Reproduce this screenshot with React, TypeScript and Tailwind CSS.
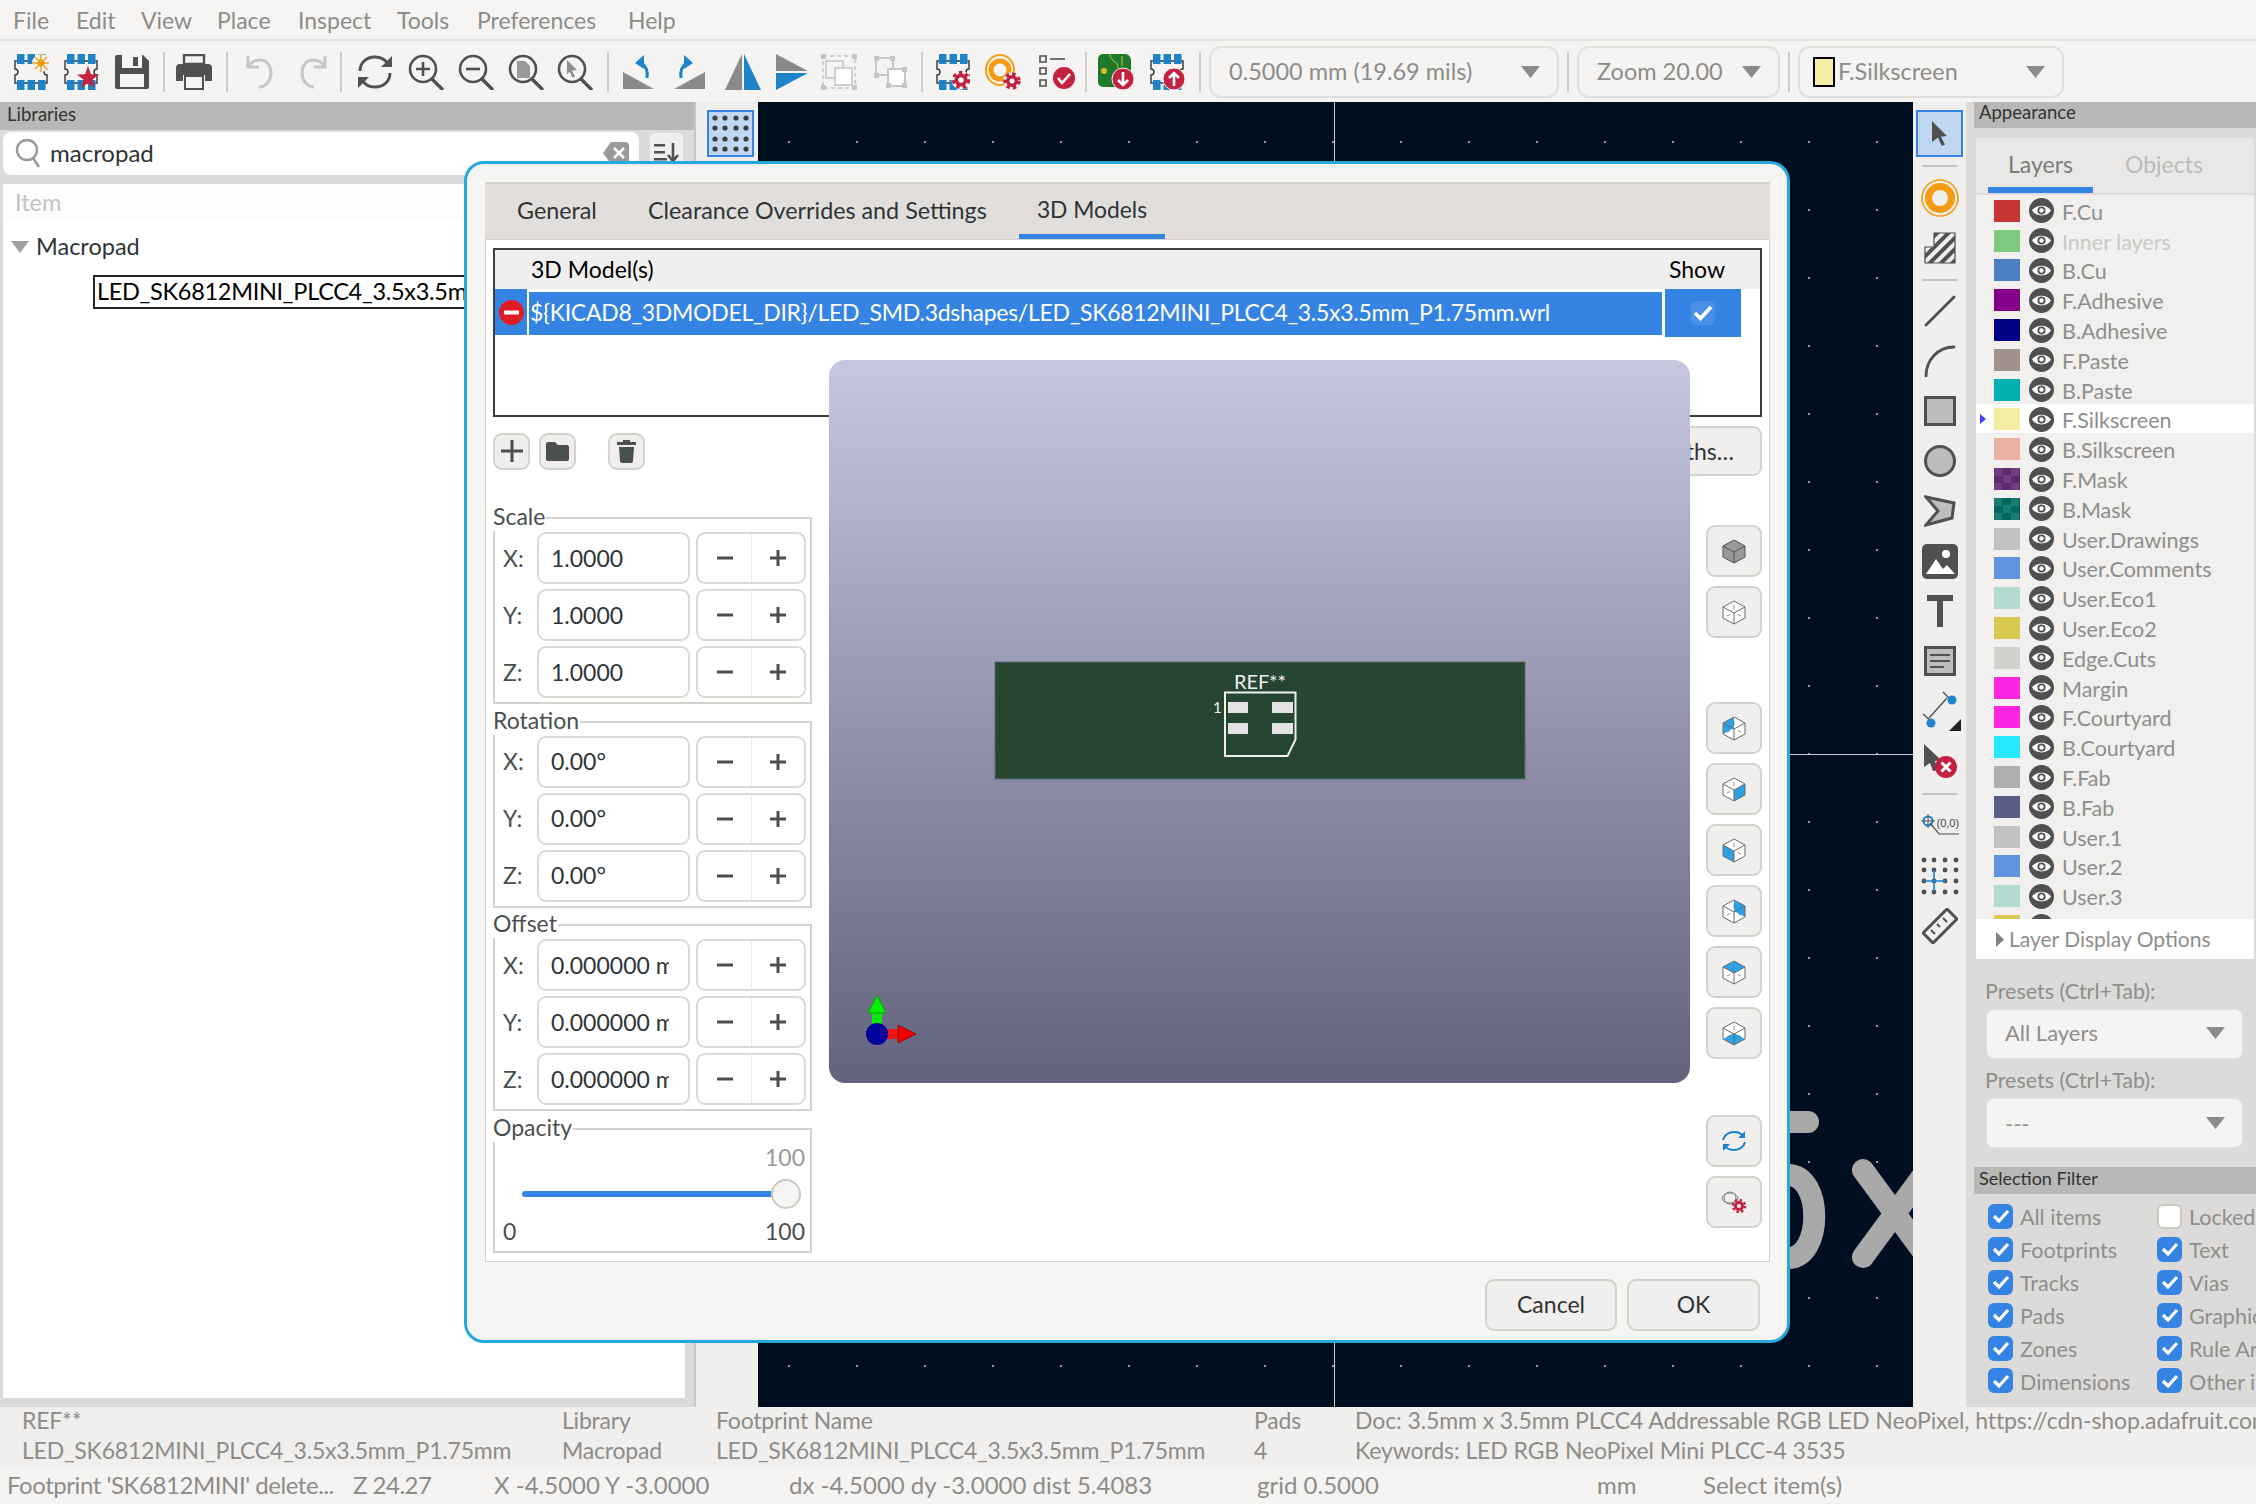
import React from "react";

const DARK = "#505050";
const CRIMSON = "#c4203f";
const BLUE = "#1e84c9";

const menus = [
  { label: "File", cls: "w-[63px]" },
  { label: "Edit", cls: "w-[65px]" },
  { label: "View", cls: "w-[76px]" },
  { label: "Place", cls: "w-[81px]" },
  { label: "Inspect", cls: "w-[99px]" },
  { label: "Tools", cls: "w-[80px]" },
  { label: "Preferences", cls: "w-[151px]" },
  { label: "Help", cls: "w-[60px]" },
];

const Ico = ({ children, cls = "" }: { children: React.ReactNode; cls?: string }) => (
  <svg width="36" height="36" viewBox="0 0 36 36" className={`shrink-0 ${cls}`}>
    {children}
  </svg>
);

const FpBase = () => (
  <>
    <path d="M2 7h32v8a3 3 0 0 0 0 6v8H2v-8a3 3 0 0 0 0-6z" fill="none" stroke="#333" strokeWidth="1.4" />
    {[4, 14.5, 25].map((x) => (
      <g key={x}>
        <rect x={x} y="0" width="7.5" height="10" fill={BLUE} />
        <rect x={x} y="26" width="7.5" height="10" fill={BLUE} />
      </g>
    ))}
  </>
);

const Gear = ({ x, y, r = 7 }: { x: number; y: number; r?: number }) => (
  <g>
    <circle cx={x} cy={y} r={r + 3} fill="#f5f4f2" />
    <circle cx={x} cy={y} r={r} fill={CRIMSON} />
    <circle cx={x} cy={y} r={r + 1} fill="none" stroke={CRIMSON} strokeWidth="3.4" strokeDasharray="3.4 3.2" />
    <circle cx={x} cy={y} r={r * 0.42} fill="#fff" />
  </g>
);

const ZoomBase = ({ children }: { children?: React.ReactNode }) => (
  <Ico>
    <circle cx="15" cy="15" r="13" fill="none" stroke={DARK} strokeWidth="2.6" />
    <path d="M24 25l10 10" stroke={DARK} strokeWidth="3.4" strokeLinecap="round" />
    {children}
  </Ico>
);

const Sep = ({ cls = "" }: { cls?: string }) => <div className={`w-[2px] h-[40px] bg-[#cfcdca] shrink-0 ${cls}`} />;

const ComboArrow = () => (
  <svg width="19" height="12" viewBox="0 0 19 12" className="shrink-0">
    <path d="M0 0h19l-9.5 12z" fill="#8a8a88" />
  </svg>
);

const Toolbar = () => (
  <div className="h-[61px] flex items-center pl-[13px] bg-[#f5f4f2] text-[#8d8c89] text-[23.5px]">
    <Ico>
      <FpBase />
      <circle cx="28" cy="9" r="9" fill="#f5f4f2" />
      <circle cx="28" cy="9" r="3.5" fill="#f39c12" />
      <path d="M28 0v18M19 9h18M22 3l12 12M34 3L22 15" stroke="#f39c12" strokeWidth="1.4" />
    </Ico>
    <Ico cls="ml-[14px]">
      <FpBase />
      <path d="M25 12l2.9 8.2 8.1.2-6.4 5 2.3 8.6-6.9-4.9-6.9 4.9 2.3-8.6-6.4-5 8.1-.2z" fill={CRIMSON} />
    </Ico>
    <Ico cls="ml-[15px]">
      <path d="M1 3a2 2 0 0 1 2-2h26l6 6v26a2 2 0 0 1-2 2H3a2 2 0 0 1-2-2z" fill={DARK} />
      <rect x="8" y="1" width="20" height="13" fill="#f5f4f2" />
      <rect x="19" y="3" width="5" height="9" fill={DARK} />
      <rect x="6" y="20" width="24" height="13" fill="#f5f4f2" />
    </Ico>
    <Sep cls="ml-[13px]" />
    <Ico cls="ml-[11px]">
      <path d="M8 1h20v9H8z" fill="none" stroke={DARK} strokeWidth="2.4" />
      <path d="M4 10h28a4 4 0 0 1 4 4v13h-7v-6H7v6H0V14a4 4 0 0 1 4-4z" fill={DARK} />
      <path d="M9 22h18v13H9z" fill="#f5f4f2" stroke={DARK} strokeWidth="2" />
    </Ico>
    <Sep cls="ml-[14px]" />
    <Ico cls="ml-[14px]">
      <path d="M6 2v11h11" fill="none" stroke="#c6c6c4" strokeWidth="3" />
      <path d="M6 13c3-5 7-7 12-7 7 0 11 6 11 13s-5 14-12 14" fill="none" stroke="#c6c6c4" strokeWidth="3" />
    </Ico>
    <Ico cls="ml-[17px]">
      <g transform="translate(36 0) scale(-1 1)">
        <path d="M6 2v11h11" fill="none" stroke="#c6c6c4" strokeWidth="3" />
        <path d="M6 13c3-5 7-7 12-7 7 0 11 6 11 13s-5 14-12 14" fill="none" stroke="#c6c6c4" strokeWidth="3" />
      </g>
    </Ico>
    <Sep cls="ml-[9px]" />
    <Ico cls="ml-[15px]">
      <path d="M3 17C3 9 9 3 18 3c6 0 10 2 13 7" fill="none" stroke={DARK} strokeWidth="3" />
      <path d="M33 19c0 8-6 14-15 14-6 0-10-2-13-7" fill="none" stroke={DARK} strokeWidth="3" />
      <path d="M35 2v11H24zM1 34V23h11z" fill={DARK} />
    </Ico>
    <div className="w-[15px] shrink-0" />
    <ZoomBase>
      <path d="M15 8v14M8 15h14" stroke={DARK} strokeWidth="2.6" />
    </ZoomBase>
    <div className="w-[14px] shrink-0" />
    <ZoomBase>
      <path d="M8 15h14" stroke={DARK} strokeWidth="2.6" />
    </ZoomBase>
    <div className="w-[14px] shrink-0" />
    <ZoomBase>
      <path d="M9 7h8l5 5v12H9z" fill="#9a9a98" />
    </ZoomBase>
    <div className="w-[13px] shrink-0" />
    <ZoomBase>
      <path d="M10 6l10 10-5 .5 3 6-2.5 1-3-6-2.5 3z" fill="#8e8e8c" />
    </ZoomBase>
    <Sep cls="ml-[14px]" />
    <Ico cls="ml-[14px]">
      <path d="M0 18v17h31z" fill="#8a8a88" />
      <path d="M24 24C25 17 24 12 18 9" fill="none" stroke={BLUE} strokeWidth="3" />
      <path d="M12 9l9-8v14z" fill={BLUE} />
    </Ico>
    <Ico cls="ml-[15px]">
      <path d="M31 18v17H0z" fill="#8a8a88" />
      <path d="M7 24C6 17 7 12 13 9" fill="none" stroke={BLUE} strokeWidth="3" />
      <path d="M19 9l-9-8v14z" fill={BLUE} />
    </Ico>
    <Ico cls="ml-[15px]">
      <path d="M17 0v36H0z" fill="#8a8a88" />
      <path d="M19 0v36h17z" fill={BLUE} />
    </Ico>
    <Ico cls="ml-[13px]">
      <path d="M2 0l32 17H2z" fill="#8a8a88" />
      <path d="M2 19h32L2 36z" fill={BLUE} />
    </Ico>
    <Ico cls="ml-[11px]">
      <rect x="2" y="2" width="32" height="32" fill="none" stroke="#c6c6c4" strokeWidth="1.6" strokeDasharray="4 3" />
      <path d="M0 0h5v5H0zM31 0h5v5h-5zM0 31h5v5H0zM31 31h5v5h-5z" fill="#c6c6c4" />
      <rect x="5" y="7" width="17" height="17" fill="#f5f4f2" stroke="#c6c6c4" strokeWidth="1.6" />
      <rect x="14" y="14" width="17" height="17" fill="#fff" stroke="#c6c6c4" strokeWidth="1.6" />
    </Ico>
    <Ico cls="ml-[17px]">
      <rect x="2" y="4" width="17" height="17" fill="none" stroke="#c6c6c4" strokeWidth="2" />
      <rect x="14" y="15" width="17" height="17" fill="#fff" stroke="#c6c6c4" strokeWidth="2" />
      <path d="M0 2h5v5H0zM16 2h5v5h-5zM0 19h5v5H0zM28 13h5v5h-5zM12 29h5v5h-5zM28 29h5v5h-5z" fill="#c6c6c4" />
    </Ico>
    <Sep cls="ml-[11px]" />
    <Ico cls="ml-[12px]">
      <FpBase />
      <Gear x={26} y={26} r={6.5} />
    </Ico>
    <Ico cls="ml-[14px]">
      <ellipse cx="15" cy="16" rx="14" ry="15" fill="none" stroke="#f39c12" strokeWidth="2" />
      <circle cx="15" cy="16" r="9" fill="none" stroke="#f39c12" strokeWidth="5" />
      <Gear x={27} y={27} r={6} />
    </Ico>
    <Ico cls="ml-[18px]">
      <path d="M1 2h6v6H1zM1 14h6v6H1zM1 26h6v6H1z" fill="none" stroke={DARK} strokeWidth="1.6" />
      <path d="M11 5h15" stroke={DARK} strokeWidth="1.6" />
      <circle cx="25" cy="24" r="11" fill={CRIMSON} />
      <path d="M19 24l4 5 8-9" fill="none" stroke="#fff" strokeWidth="2.6" />
    </Ico>
    <Sep cls="ml-[10px]" />
    <Ico cls="ml-[11px]">
      <path d="M5 0h22a6 6 0 0 1 6 6v22a5 5 0 0 1-5 5H5a5 5 0 0 1-5-5V5a5 5 0 0 1 5-5z" fill="#1d7a2b" />
      <path d="M12 0c0 8 8 6 8 14M24 2v10" fill="none" stroke="#e0b830" strokeWidth="1" />
      <circle cx="6" cy="17" r="3" fill="#e0b830" />
      <circle cx="25" cy="25" r="11" fill={CRIMSON} stroke="#f5f4f2" />
      <path d="M25 18v13M20 26l5 5 5-5" fill="none" stroke="#fff" strokeWidth="2.6" />
    </Ico>
    <Ico cls="ml-[15px]">
      <FpBase />
      <circle cx="25" cy="25" r="11" fill={CRIMSON} stroke="#f5f4f2" />
      <path d="M25 32V19M20 24l5-5 5 5" fill="none" stroke="#fff" strokeWidth="2.6" />
    </Ico>
    <Sep cls="ml-[14px]" />
    <div className="ml-[8px] w-[350px] h-[52px] rounded-[12px] border-2 border-[#e2e0dd] flex items-center justify-between pl-[18px] pr-[17px] shrink-0">
      <span>0.5000 mm (19.69 mils)</span>
      <ComboArrow />
    </div>
    <Sep cls="ml-[8px]" />
    <div className="ml-[8px] w-[203px] h-[52px] rounded-[12px] border-2 border-[#e2e0dd] flex items-center justify-between pl-[18px] pr-[17px] shrink-0">
      <span>Zoom 20.00</span>
      <ComboArrow />
    </div>
    <Sep cls="ml-[8px]" />
    <div className="ml-[8px] w-[266px] h-[52px] rounded-[12px] border-2 border-[#e2e0dd] flex items-center pl-[13px] pr-[17px] shrink-0">
      <div className="w-[22px] h-[30px] bg-[#f2eda1] border-2 border-black shrink-0" />
      <span className="ml-[3px] flex-1">F.Silkscreen</span>
      <ComboArrow />
    </div>
  </div>
);

const LeftPanel = () => (
  <div className="w-[696px] shrink-0 bg-[#dcdbd9] flex flex-col border-r-2 border-[#c8c7c5]">
    <div className="h-[28px] bg-[#b8b8b6] pl-[7px] text-[18.5px] leading-[25px] text-[#333]">Libraries</div>
    <div className="h-[46px] flex items-center pl-[3px]">
      <div className="w-[636px] h-[43px] bg-white rounded-[8px] flex items-center pl-[12px] pr-[10px] text-[24px] text-[#2e3436]">
        <svg width="26" height="32" viewBox="0 0 26 32" className="shrink-0">
          <circle cx="12" cy="13" r="10" fill="none" stroke="#9a9a98" strokeWidth="2.4" />
          <path d="M18 21l6 9" stroke="#9a9a98" strokeWidth="2.6" />
        </svg>
        <span className="ml-[9px] flex-1">macropad</span>
        <svg width="26" height="22" viewBox="0 0 26 22" className="shrink-0">
          <path d="M8 0h14a4 4 0 0 1 4 4v14a4 4 0 0 1-4 4H8l-8-11z" fill="#9a9a98" />
          <path d="M11 6l10 10M21 6L11 16" stroke="#fff" strokeWidth="2.6" />
        </svg>
      </div>
      <div className="ml-[10px] w-[35px] h-[43px] bg-[#f1efed] rounded-[6px] border border-[#e0dedb] flex items-center justify-center shrink-0">
        <svg width="26" height="24" viewBox="0 0 26 24">
          <path d="M0 3h11v2.6H0zM0 10h11v2.6H0zM0 17h13v2.6H0z" fill={DARK} />
          <path d="M19 2v17M14 14l5 6 5-6" fill="none" stroke={DARK} strokeWidth="2.6" />
        </svg>
      </div>
    </div>
    <div className="flex-1 mt-[8px] ml-[3px] mr-[9px] mb-[9px] bg-white flex flex-col overflow-hidden text-[23.5px]">
      <div className="h-[38px] bg-[#fcfcfc] pl-[12px] leading-[37px] text-[#c2c2c0]">Item</div>
      <div className="h-[53px] flex items-center pl-[8px] pb-[4px] text-[#2e3436]">
        <svg width="18" height="12" viewBox="0 0 18 12">
          <path d="M0 0h18l-9 12z" fill="#a0a09e" />
        </svg>
        <span className="ml-[7px]">Macropad</span>
      </div>
      <div className="ml-[90px] w-[500px] h-[34px] border-2 border-[#222] text-black pl-[2px] leading-[29px] whitespace-nowrap overflow-hidden tracking-[-0.3px]">
        LED_SK6812MINI_PLCC4_3.5x3.5mm_P1.75mm
      </div>
    </div>
  </div>
);

const Canvas = () => (
  <div className="relative w-[1155px] shrink-0 overflow-hidden bg-[#000f20] bg-[radial-gradient(circle,#9aa0a6_1px,transparent_1px)] bg-[size:68px_68px] bg-[position:-3px_6px]">
    <svg width="1155" height="1305" viewBox="0 0 1155 1305" className="absolute left-0 top-0">
      <g fill="none" stroke="#a9a9a9" strokeWidth="22" strokeLinecap="round">
        <path d="M960 1020H1050" />
        <path d="M960 1073H1030C1065 1073 1065 1156 1030 1156H960" />
        <path d="M1105 1068L1169 1155M1105 1155L1169 1068" />
      </g>
      <path d="M576.5 0V1305M0 652.5H1155" stroke="#c8c8c8" strokeWidth="1" />
    </svg>
  </div>
);

const ToolCell = ({ children, sel = false, cls = "" }: { children: React.ReactNode; sel?: boolean; cls?: string }) => (
  <div
    className={`w-[47px] flex items-center justify-center shrink-0 ${
      sel ? "h-[47px] bg-[#c0d7f2] border-2 border-[#3584e4]" : "h-[50px]"
    } ${cls}`}
  >
    {children}
  </div>
);

const ToolSep = () => <div className="w-[35px] h-[2px] bg-[#c4c3c1] shrink-0 ml-[6px]" />;

const ToolColumn = () => (
  <div className="w-[53px] shrink-0 bg-[#f1efed] pt-[8px] pl-[3px] flex flex-col">
    <ToolCell sel>
      <svg width="18" height="26" viewBox="0 0 18 26" className="-mt-[2px]">
        <path d="M1 1l15 15-6 .8 4 8-3.4 1-3.6-8.2L1 22z" fill={DARK} />
      </svg>
    </ToolCell>
    <div className="h-[8px]" />
    <ToolSep />
    <ToolCell cls="mt-[6px]">
      <svg width="38" height="38" viewBox="0 0 38 38">
        <circle cx="19" cy="19" r="18" fill="none" stroke="#f39c12" strokeWidth="1.6" />
        <circle cx="19" cy="19" r="11.5" fill="none" stroke="#f39c12" strokeWidth="7" />
      </svg>
    </ToolCell>
    <ToolCell>
      <svg width="32" height="32" viewBox="0 0 32 32">
        <defs>
          <pattern id="hatch" width="8" height="8" patternUnits="userSpaceOnUse" patternTransform="rotate(45)">
            <rect width="4" height="8" fill={DARK} />
          </pattern>
        </defs>
        <path d="M10 1h21v30H1V15h9z" fill="url(#hatch)" stroke={DARK} strokeWidth="1.2" />
      </svg>
    </ToolCell>
    <div className="h-[6px]" />
    <ToolSep />
    <ToolCell cls="mt-[5px]">
      <svg width="32" height="32" viewBox="0 0 32 32">
        <path d="M2 30L30 2" stroke={DARK} strokeWidth="2.8" strokeLinecap="round" />
      </svg>
    </ToolCell>
    <ToolCell>
      <svg width="32" height="32" viewBox="0 0 32 32">
        <path d="M2 31C2 15 14 2 30 2" fill="none" stroke={DARK} strokeWidth="2.8" strokeLinecap="round" />
      </svg>
    </ToolCell>
    <ToolCell>
      <svg width="32" height="30" viewBox="0 0 32 30">
        <rect x="1.5" y="1.5" width="29" height="27" fill="#bdbdbd" stroke={DARK} strokeWidth="3" />
      </svg>
    </ToolCell>
    <ToolCell>
      <svg width="32" height="32" viewBox="0 0 32 32">
        <circle cx="16" cy="16" r="14.5" fill="#bdbdbd" stroke={DARK} strokeWidth="3" />
      </svg>
    </ToolCell>
    <ToolCell>
      <svg width="32" height="32" viewBox="0 0 32 32">
        <path d="M2 2l28 6-2 15-26 7 12-14z" fill="#bdbdbd" stroke={DARK} strokeWidth="3" />
      </svg>
    </ToolCell>
    <ToolCell>
      <svg width="36" height="35" viewBox="0 0 36 35">
        <rect width="36" height="35" rx="5" fill={DARK} />
        <circle cx="24" cy="10" r="4" fill="#fff" />
        <path d="M4 30l10-15 7 10 4-4 8 9z" fill="#fff" />
      </svg>
    </ToolCell>
    <ToolCell>
      <svg width="32" height="32" viewBox="0 0 32 32">
        <path d="M3 3h26M16 3v29" stroke={DARK} strokeWidth="6" />
      </svg>
    </ToolCell>
    <ToolCell>
      <svg width="32" height="30" viewBox="0 0 32 30">
        <rect x="1.5" y="1.5" width="29" height="27" fill="#bdbdbd" stroke={DARK} strokeWidth="3" />
        <path d="M6 9h20M6 15h20M6 21h14" stroke={DARK} strokeWidth="2" />
      </svg>
    </ToolCell>
    <ToolCell>
      <svg width="42" height="42" viewBox="0 0 42 42">
        <path d="M4 24l9 8M24 2l9 9M10 28L28 8" fill="none" stroke={DARK} strokeWidth="1.4" />
        <circle cx="12" cy="33" r="4.5" fill={BLUE} />
        <circle cx="33" cy="10" r="4.5" fill={BLUE} />
        <path d="M42 29v12H30z" fill="#222" />
      </svg>
    </ToolCell>
    <ToolCell>
      <svg width="36" height="36" viewBox="0 0 36 36">
        <path d="M2 1l17 16-6 1 3 9-5 1-3-8-6 4z" fill={DARK} />
        <circle cx="24" cy="24" r="11" fill={CRIMSON} />
        <path d="M19.5 19.5l9 9M28.5 19.5l-9 9" stroke="#fff" strokeWidth="3" />
      </svg>
    </ToolCell>
    <div className="h-[7px]" />
    <ToolSep />
    <ToolCell cls="mt-[6px]">
      <div className="relative w-[38px] h-[24px]">
        <svg width="38" height="24" viewBox="0 0 38 24" className="absolute left-0 top-0">
          <circle cx="7" cy="7" r="4.5" fill="none" stroke={BLUE} strokeWidth="2" />
          <path d="M0 7h14M7 0v14" stroke={DARK} strokeWidth="1" />
          <path d="M9 9l9 11h20" fill="none" stroke={DARK} strokeWidth="1.2" />
        </svg>
        <span className="absolute left-[16px] top-[2px] text-[11px] leading-[14px] text-[#444] whitespace-nowrap font-['Liberation_Sans',sans-serif]">
          (0,0)
        </span>
      </div>
    </ToolCell>
    <ToolCell>
      <svg width="38" height="38" viewBox="0 0 38 38">
        {[3, 13, 24, 35].map((y) =>
          [3, 13, 24, 35].map((x) => <circle key={`${x}-${y}`} cx={x} cy={y} r="2.4" fill={DARK} />),
        )}
        <path d="M13 13v22M3 24h22" stroke={BLUE} strokeWidth="1.6" />
      </svg>
    </ToolCell>
    <ToolCell>
      <svg width="36" height="36" viewBox="0 0 36 36">
        <path d="M1 25L25 1l10 10-24 24z" fill="#f1efed" stroke={DARK} strokeWidth="3" />
        <path d="M9 22l4 4M15 16l3 3M21 10l4 4" stroke={DARK} strokeWidth="2" />
      </svg>
    </ToolCell>
  </div>
);

const Eye = () => (
  <svg width="25" height="25" viewBox="0 0 25 25" className="shrink-0">
    <circle cx="12.5" cy="12.5" r="12.5" fill="#505050" />
    <path d="M3 12.5C7 6 18 6 22 12.5 18 19 7 19 3 12.5z" fill="#fff" />
    <circle cx="12.5" cy="12.5" r="4" fill="#505050" />
    <circle cx="12.5" cy="12.5" r="2.2" fill="#fff" />
  </svg>
);

const layers = [
  { name: "F.Cu", sw: "bg-[#c83434]" },
  { name: "Inner layers", sw: "bg-[#7fc87f]", off: true },
  { name: "B.Cu", sw: "bg-[#4d7fc4]" },
  { name: "F.Adhesive", sw: "bg-[#840084]" },
  { name: "B.Adhesive", sw: "bg-[#000084]" },
  { name: "F.Paste", sw: "bg-[#a0918a]" },
  { name: "B.Paste", sw: "bg-[#00b0b0]" },
  { name: "F.Silkscreen", sw: "bg-[#f2eda1]", active: true },
  { name: "B.Silkscreen", sw: "bg-[#e8b2a7]" },
  { name: "F.Mask", sw: "bg-[repeating-conic-gradient(#5d2a6c_0%_25%,#6f3d80_0%_50%)] bg-[size:17px_15px]" },
  { name: "B.Mask", sw: "bg-[repeating-conic-gradient(#00685f_0%_25%,#1b7b70_0%_50%)] bg-[size:17px_15px]" },
  { name: "User.Drawings", sw: "bg-[#c2c2c2]" },
  { name: "User.Comments", sw: "bg-[#5f94dc]" },
  { name: "User.Eco1", sw: "bg-[#b4dbd2]" },
  { name: "User.Eco2", sw: "bg-[#d8c852]" },
  { name: "Edge.Cuts", sw: "bg-[#d0d2cd]" },
  { name: "Margin", sw: "bg-[#ff26e2]" },
  { name: "F.Courtyard", sw: "bg-[#ff26e2]" },
  { name: "B.Courtyard", sw: "bg-[#26e9ff]" },
  { name: "F.Fab", sw: "bg-[#afafaf]" },
  { name: "B.Fab", sw: "bg-[#585d84]" },
  { name: "User.1", sw: "bg-[#c2c2c2]" },
  { name: "User.2", sw: "bg-[#5f94dc]" },
  { name: "User.3", sw: "bg-[#b4dbd2]" },
  { name: "User.4", sw: "bg-[#d8c852]" },
];

const filters = [
  ["All items", "Locked"],
  ["Footprints", "Text"],
  ["Tracks", "Vias"],
  ["Pads", "Graphics"],
  ["Zones", "Rule Areas"],
  ["Dimensions", "Other items"],
];

const Check = ({ label, on = true }: { label: string; on?: boolean }) => (
  <div className="w-[169px] shrink-0 flex items-center">
    {on ? (
      <div className="w-[25px] h-[25px] rounded-[6px] bg-[#3584e4] flex items-center justify-center shrink-0">
        <svg width="18" height="14" viewBox="0 0 18 14">
          <path d="M2 7l5 5 9-10" fill="none" stroke="#fff" strokeWidth="3.2" />
        </svg>
      </div>
    ) : (
      <div className="w-[25px] h-[25px] rounded-[6px] bg-white border-2 border-[#cdc7c2] shrink-0" />
    )}
    <span className="ml-[7px] mt-[2px] whitespace-nowrap">{label}</span>
  </div>
);

const RightPanel = () => (
  <div className="w-[282px] shrink-0 bg-[#dcdbd9] flex flex-col overflow-hidden text-[21.5px] text-[#8e8e8c]">
    <div className="h-[26px] bg-[#b8b8b6] pl-[5px] text-[18.5px] leading-[21px] text-[#333]">Appearance</div>
    <div className="h-[10px]" />
    <div className="ml-[2px] mr-[2px] bg-[#f1f0ee] flex flex-col">
      <div className="h-[57px] bg-[#e9e8e6] flex border-b-2 border-[#dcdbd9] text-[23px]">
        <div className="ml-[12px] w-[105px] pt-[3px] flex items-center justify-center border-b-[6px] border-[#3584e4] text-[#7c7c7a]">
          Layers
        </div>
        <div className="ml-[32px] flex items-center pt-[3px] pb-[6px] text-[#bcbcba]">Objects</div>
      </div>
      <div className="h-[724px] overflow-hidden">
        {layers.map((l) => (
          <div
            key={l.name}
            className={`relative h-[29.8px] flex items-center pl-[18px] pt-[2px] ${l.active ? "bg-white" : ""}`}
          >
            {l.active && (
              <svg width="6" height="10" viewBox="0 0 6 10" className="absolute left-[4px] top-[10px]">
                <path d="M0 0l6 5-6 5z" fill="#4040ff" />
              </svg>
            )}
            <div className={`w-[26px] h-[22px] shrink-0 ${l.sw}`} />
            <div className="ml-[9px]">
              <Eye />
            </div>
            <span className={`ml-[8px] mt-[2px] whitespace-nowrap ${l.off ? "text-[#c9c9c7]" : ""}`}>{l.name}</span>
          </div>
        ))}
      </div>
      <div className="h-[40px] bg-white flex items-center pl-[20px] text-[21px]">
        <svg width="8" height="15" viewBox="0 0 8 15" className="shrink-0">
          <path d="M0 0l8 7.5L0 15z" fill="#808080" />
        </svg>
        <span className="ml-[5px]">Layer Display Options</span>
      </div>
    </div>
    <div className="mt-[17px] ml-[11px] h-[30px] leading-[30px]">Presets (Ctrl+Tab):</div>
    <div className="mt-[3px] ml-[12px] w-[257px] h-[50px] rounded-[8px] bg-[#f5f4f2] border border-[#e4e2df] flex items-center justify-between pl-[18px] pr-[17px] pb-[3px] text-[22px]">
      <span>All Layers</span>
      <ComboArrow />
    </div>
    <div className="mt-[6px] ml-[11px] h-[30px] leading-[30px]">Presets (Ctrl+Tab):</div>
    <div className="mt-[3px] ml-[12px] w-[257px] h-[50px] rounded-[8px] bg-[#f5f4f2] border border-[#e4e2df] flex items-center justify-between pl-[18px] pr-[17px] text-[22px]">
      <span>---</span>
      <ComboArrow />
    </div>
    <div className="mt-[19px] h-[27px] bg-[#b8b8b6] pl-[5px] text-[18px] leading-[22px] text-[#333]">Selection Filter</div>
    <div className="mt-[6px] pl-[14px] flex flex-col">
      {filters.map(([a, b]) => (
        <div key={a} className="h-[32.9px] flex items-center whitespace-nowrap">
          <Check label={a} />
          <Check label={b} on={b !== "Locked"} />
        </div>
      ))}
    </div>
  </div>
);

const MsgCol = ({ top, bottom, cls }: { top: string; bottom: string; cls: string }) => (
  <div className={`-mt-[2px] ${cls}`}>
    <div>{top}</div>
    <div>{bottom}</div>
  </div>
);

const MessagePanel = () => (
  <div className="h-[60px] bg-[#f1efed] flex pl-[22px] text-[23px] leading-[30px] text-[#8d8c89] whitespace-nowrap overflow-hidden tracking-[-0.2px]">
    <MsgCol cls="w-[540px] shrink-0" top="REF**" bottom="LED_SK6812MINI_PLCC4_3.5x3.5mm_P1.75mm" />
    <MsgCol cls="w-[154px] shrink-0" top="Library" bottom="Macropad" />
    <MsgCol cls="w-[538px] shrink-0" top="Footprint Name" bottom="LED_SK6812MINI_PLCC4_3.5x3.5mm_P1.75mm" />
    <MsgCol cls="w-[101px] shrink-0" top="Pads" bottom="4" />
    <MsgCol
      cls="flex-1 overflow-hidden tracking-[-0.1px]"
      top="Doc: 3.5mm x 3.5mm PLCC4 Addressable RGB LED NeoPixel, https://cdn-shop.adafruit.com/datasheets/SK6812MINI.pdf"
      bottom="Keywords: LED RGB NeoPixel Mini PLCC-4 3535"
    />
  </div>
);

const StatusBar = () => (
  <div className="h-[37px] bg-[#f5f4f2] flex items-center pl-[7px] pb-[2px] text-[24px] text-[#8d8c89] whitespace-nowrap">
    <div className="w-[346px] shrink-0 tracking-[-0.45px]">Footprint 'SK6812MINI' delete...</div>
    <div className="w-[141px] shrink-0 tracking-[-0.5px]">Z 24.27</div>
    <div className="w-[295px] shrink-0">X -4.5000 Y -3.0000</div>
    <div className="w-[468px] shrink-0">dx -4.5000 dy -3.0000 dist 5.4083</div>
    <div className="w-[340px] shrink-0">grid 0.5000</div>
    <div className="w-[106px] shrink-0">mm</div>
    <div>Select item(s)</div>
  </div>
);

const Minus = () => (
  <svg width="16" height="4" viewBox="0 0 16 4">
    <rect width="16" height="3" y="0.5" fill="#4a4f50" />
  </svg>
);

const Plus = () => (
  <svg width="16" height="16" viewBox="0 0 16 16">
    <path d="M0 6.5h16v3H0zM6.5 0h3v16h-3z" fill="#4a4f50" />
  </svg>
);

const FieldRow = ({ axis, value }: { axis: string; value: string }) => (
  <div className="h-[52px] flex items-center">
    <div className="w-[42px] pl-[8px] shrink-0 text-[#4a4f50]">{axis}</div>
    <div className="w-[153px] h-[52px] bg-white border-2 border-[#dcd8d4] rounded-[9px] pl-[12px] pr-[19px] flex items-center shrink-0">
      <span className="block w-full overflow-hidden whitespace-nowrap text-[#2e3436]">{value}</span>
    </div>
    <div className="ml-[6px] w-[110px] h-[52px] border-2 border-[#dcd8d4] rounded-[9px] flex shrink-0">
      <div className="w-[54px] flex items-center justify-center border-r border-[#ecebe9]">
        <Minus />
      </div>
      <div className="flex-1 flex items-center justify-center">
        <Plus />
      </div>
    </div>
  </div>
);

const Group = ({ title, children }: { title: string; children: React.ReactNode }) => (
  <div className="relative border-2 border-[#d5d1cc]">
    <div className="absolute -left-[2px] -top-[18px] h-[30px] leading-[30px] bg-white pr-[1px] text-[#4a4f50]">{title}</div>
    {children}
  </div>
);

const Fields = ({ title, values }: { title: string; values: string }) => (
  <Group title={title}>
    <div className="pt-[13px] pb-[4px] flex flex-col gap-[5px]">
      <FieldRow axis="X:" value={values} />
      <FieldRow axis="Y:" value={values} />
      <FieldRow axis="Z:" value={values} />
    </div>
  </Group>
);

const Btn = ({ children, cls = "" }: { children?: React.ReactNode; cls?: string }) => (
  <div
    className={`flex items-center justify-center rounded-[9px] border-2 border-[#d5d1cc] bg-[#f1efed] text-[#2e3436] shrink-0 ${cls}`}
  >
    {children}
  </div>
);

type Face = "solid" | "none" | "backLeft" | "right" | "left" | "backRight" | "top" | "bottom";

const facePts: Record<string, string> = {
  backLeft: "12,1 1,7 1,18 12,12",
  right: "23,7 12,13 12,24 23,18",
  left: "1,7 12,13 12,24 1,18",
  backRight: "12,1 23,7 23,18 12,12",
  top: "12,1 23,7 12,13 1,7",
  bottom: "1,18 12,12 23,18 12,24",
};

const Cube = ({ face }: { face: Face }) => (
  <svg width="24" height="25" viewBox="0 0 24 25">
    <path d="M12 1l11 6v11l-11 6-11-6V7z" fill={face === "solid" ? "#9a9a98" : "#fff"} />
    {face !== "solid" && face !== "none" && <polygon points={facePts[face]} fill="#2ba3e8" />}
    <path
      d="M12 1l11 6v11l-11 6-11-6V7zM1 7l11 6 11-6M12 13v11"
      fill="none"
      stroke={face === "solid" ? "#505050" : "#6a6a68"}
      strokeWidth="1"
    />
    {face !== "solid" && <path d="M12 5v4M5 16l3-1.5M16 14.5l3 1.5" stroke="#6a6a68" strokeWidth="0.8" />}
  </svg>
);

const Preview = () => (
  <div className="absolute left-[343px] top-[120px] w-[861px] h-[723px] rounded-[16px] overflow-hidden bg-gradient-to-b from-[#c6c7df] to-[#64637f]">
    <svg width="861" height="723" viewBox="0 0 861 723" className="absolute left-0 top-0">
      <rect x="166" y="302" width="530" height="117" fill="#274632" stroke="#5b6a72" strokeWidth="1" />
      <text x="405" y="329" fill="#f0f0f0" fontSize="20" textLength="52" fontFamily="Lato, sans-serif">
        REF**
      </text>
      <text x="384" y="353" fill="#f0f0f0" fontSize="15" fontFamily="Lato, sans-serif">
        1
      </text>
      <path d="M396 332.5h70.5v47l-8 16.5h-62.5z" fill="none" stroke="#f0f0f0" strokeWidth="2" />
      <path d="M399 342h20v11h-20zM443 342h21v11h-21zM399 363h20v11h-20zM443 363h21v11h-21z" fill="#e3e3e3" />
      <path d="M43 653h10v18H43z" fill="#0ce80c" />
      <path d="M48 635l9 18H39z" fill="#00f000" stroke="#0a9a0a" strokeWidth="1" />
      <path d="M56 669h16v10H56z" fill="#f01414" />
      <path d="M87 674l-18 9v-18z" fill="#f00000" stroke="#9a0a0a" strokeWidth="1" />
      <ellipse cx="48" cy="674" rx="11" ry="11" fill="#00009a" />
    </svg>
  </div>
);

const Dialog = () => (
  <div className="absolute left-[464px] top-[161px] w-[1326px] h-[1182px] border-[3px] border-[#28a8dc] rounded-[20px] bg-[#f6f5f4] pt-[18px] pl-[18px] pr-[17px] flex flex-col text-[23px] text-[#2e3436]">
    <div className="h-[57px] bg-[#e1dedb] flex pl-[12px] shrink-0 border-t-2 border-[#d5d1cc] text-[23.3px]">
      <div className="w-[132px] pl-[20px] pb-[3px] flex items-center">General</div>
      <div className="w-[378px] pl-[19px] pb-[3px] flex items-center whitespace-nowrap">Clearance Overrides and Settings</div>
      <div className="ml-[12px] w-[146px] pt-[1px] flex items-center justify-center border-b-[5px] border-[#3584e4] text-[22.8px]">3D Models</div>
    </div>
    <div className="relative h-[1023px] bg-white border border-[#d5d1cc] pt-[8px] px-[7px] flex flex-col shrink-0">
      <div className="h-[169px] border-2 border-[#3d3d3d] flex flex-col shrink-0">
        <div className="h-[39px] bg-[#f1efed] flex items-center text-black shrink-0">
          <span className="ml-[36px]">3D Model(s)</span>
          <span className="ml-auto mr-[35px]">Show</span>
        </div>
        <div className="flex h-[46px]">
          <div className="w-[32px] bg-[#3584e4] flex items-center justify-center shrink-0">
            <svg width="25" height="25" viewBox="0 0 25 25">
              <circle cx="12.5" cy="12.5" r="12.5" fill="#e01b24" />
              <rect x="5" y="10.5" width="15" height="4" fill="#fff" />
            </svg>
          </div>
          <div className="ml-[2px] mt-[3px] w-[1133px] h-[43px] bg-[#3584e4] text-white pl-[1px] leading-[41px] whitespace-nowrap overflow-hidden tracking-[-0.28px]">
            {"${KICAD8_3DMODEL_DIR}/LED_SMD.3dshapes/LED_SK6812MINI_PLCC4_3.5x3.5mm_P1.75mm.wrl"}
          </div>
          <div className="ml-[3px] w-[76px] h-[48px] bg-[#3584e4] flex items-center justify-center">
            <div className="w-[24px] h-[24px] rounded-[5px] bg-[#4a90e8] flex items-center justify-center">
              <svg width="20" height="16" viewBox="0 0 20 16">
                <path d="M2 8l5.5 5.5L18 2" fill="none" stroke="#fff" strokeWidth="3.6" />
              </svg>
            </div>
          </div>
        </div>
      </div>
      <div className="mt-[9px] h-[50px] flex items-center shrink-0">
        <Btn cls="w-[37px] h-[37px]">
          <svg width="22" height="22" viewBox="0 0 22 22">
            <path d="M0 9.5h22v3H0zM9.5 0h3v22h-3z" fill="#4a4f50" />
          </svg>
        </Btn>
        <Btn cls="ml-[9px] w-[37px] h-[37px]">
          <svg width="23" height="19" viewBox="0 0 23 19">
            <path d="M2 0h7l3 3h9a2 2 0 0 1 2 2v12a2 2 0 0 1-2 2H2a2 2 0 0 1-2-2V2a2 2 0 0 1 2-2z" fill="#4a4f50" />
          </svg>
        </Btn>
        <Btn cls="ml-[32px] w-[37px] h-[37px]">
          <svg width="19" height="23" viewBox="0 0 19 23">
            <path d="M6 0h7v2h6v3H0V2h6zM2 7h15l-1 14a2 2 0 0 1-2 2H5a2 2 0 0 1-2-2z" fill="#4a4f50" />
          </svg>
        </Btn>
        <Btn cls="ml-auto w-[240px] h-[50px] justify-end pr-[26px] whitespace-nowrap">Configure Paths…</Btn>
      </div>
      <div className="mt-[41px] flex justify-between">
        <div className="w-[319px] flex flex-col gap-[16.5px]">
          <Fields title="Scale" values="1.0000" />
          <Fields title="Rotation" values="0.00°" />
          <Fields title="Offset" values="0.000000 mm" />
          <Group title="Opacity">
            <div className="h-[121px] pt-[12px] flex flex-col">
              <div className="h-[30px] leading-[30px] text-right pr-[5px] text-[#9a9a98]">100</div>
              <div className="relative mt-[7px] ml-[27px] mr-[24px] h-[30px]">
                <div className="mt-[12px] h-[6px] rounded-full bg-[#3584e4]" />
                <div className="absolute -right-[15px] top-0 w-[30px] h-[30px] rounded-full bg-[#f6f5f4] border-2 border-[#cdc7c2]" />
              </div>
              <div className="mt-[7px] h-[30px] leading-[30px] flex justify-between pl-[8px] pr-[5px] text-[#4a4f50]">
                <span>0</span>
                <span>100</span>
              </div>
            </div>
          </Group>
        </div>
        <div className="w-[56px] pt-[8px] flex flex-col">
          <Btn cls="h-[52px]">
            <Cube face="solid" />
          </Btn>
          <Btn cls="mt-[9px] h-[52px]">
            <Cube face="none" />
          </Btn>
          <Btn cls="mt-[64px] h-[52px]">
            <Cube face="backLeft" />
          </Btn>
          <Btn cls="mt-[9px] h-[52px]">
            <Cube face="right" />
          </Btn>
          <Btn cls="mt-[9px] h-[52px]">
            <Cube face="left" />
          </Btn>
          <Btn cls="mt-[9px] h-[52px]">
            <Cube face="backRight" />
          </Btn>
          <Btn cls="mt-[9px] h-[52px]">
            <Cube face="top" />
          </Btn>
          <Btn cls="mt-[9px] h-[52px]">
            <Cube face="bottom" />
          </Btn>
          <Btn cls="mt-[56px] h-[52px]">
            <svg width="24" height="24" viewBox="0 0 24 24">
              <path d="M1 11C2 6 7 3 12 3c4 0 7 1 9 4M23 13c-1 5-6 8-11 8-4 0-7-1-9-4" fill="none" stroke={BLUE} strokeWidth="2" />
              <path d="M23 2v7h-7zM1 22v-7h7z" fill={BLUE} />
            </svg>
          </Btn>
          <Btn cls="mt-[9px] h-[52px]">
            <svg width="26" height="24" viewBox="0 0 26 24">
              <ellipse cx="9" cy="8" rx="8" ry="5" fill="none" stroke="#6a8aa8" strokeWidth="1" />
              <circle cx="9" cy="8" r="6" fill="none" stroke="#777" strokeWidth="1" />
              <circle cx="18" cy="16" r="5" fill={CRIMSON} />
              <circle cx="18" cy="16" r="6" fill="none" stroke={CRIMSON} strokeWidth="2.4" strokeDasharray="2.4 2.3" />
              <circle cx="18" cy="16" r="2" fill="#fff" />
            </svg>
          </Btn>
        </div>
      </div>
      <Preview />
    </div>
    <div className="mt-[17px] pr-[10px] flex justify-end gap-[10px]">
      <Btn cls="w-[132px] h-[52px] pb-[2px]">Cancel</Btn>
      <Btn cls="w-[133px] h-[52px] pb-[2px]">OK</Btn>
    </div>
  </div>
);

export default function App() {
  return (
    <div className="relative w-[2256px] h-[1504px] overflow-hidden flex flex-col bg-[#f5f4f2] font-['Lato','Noto_Sans',sans-serif]">
      <div className="h-[41px] bg-[#f6f5f4] border-b-2 border-[#e4e2df] flex items-center pl-[13px] pt-[2px] text-[23px] text-[#8d8c89]">
        {menus.map((m) => (
          <div key={m.label} className={`${m.cls} shrink-0`}>
            {m.label}
          </div>
        ))}
      </div>
      <Toolbar />
      <div className="h-[1305px] flex shrink-0">
        <LeftPanel />
        <div className="w-[62px] shrink-0 bg-[#f1efed] pt-[8px] pl-[11px]">
          <div className="w-[47px] h-[47px] bg-[#c0d7f2] border-2 border-[#3584e4] flex items-center justify-center">
            <svg width="39" height="39" viewBox="0 0 39 39">
              {[4, 14, 25, 35].map((y) =>
                [4, 14, 25, 35].map((x) => <circle key={`${x}-${y}`} cx={x} cy={y} r="2.6" fill="#3d3d3d" />),
              )}
            </svg>
          </div>
        </div>
        <Canvas />
        <ToolColumn />
        <div className="w-[8px] shrink-0 bg-[#dcdbd9]" />
        <RightPanel />
      </div>
      <MessagePanel />
      <StatusBar />
      <Dialog />
    </div>
  );
}
